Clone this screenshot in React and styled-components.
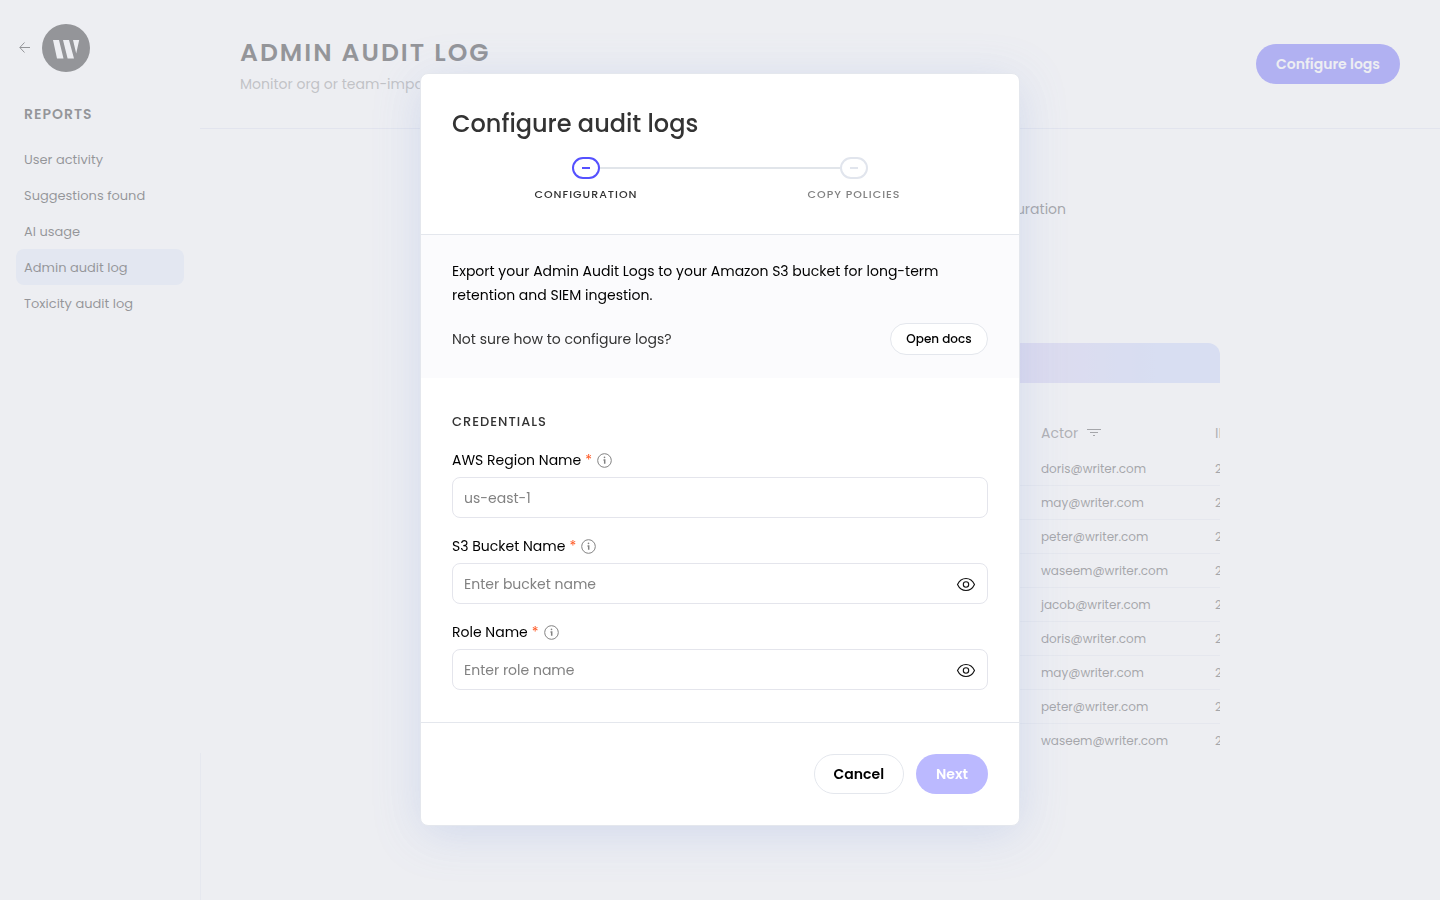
import React, { useState } from "react";
import styled, { createGlobalStyle } from "styled-components";

const GlobalStyle = createGlobalStyle`
  * {
    box-sizing: border-box;
  }
  body {
    margin: 0;
    background-color: #fff;
    color: #000;
    font-family: Poppins, Inter, "Open Sans", sans-serif;
    font-size: 14px;
    line-height: 24px;
  }
  h1, h2, h3, p, ul {
    margin: 0;
    padding: 0;
  }
  a {
    color: inherit;
    text-decoration: none;
  }
  button, input {
    font-family: inherit;
    font-size: inherit;
    line-height: inherit;
  }
`;

const Page = styled.div`
  display: flex;
  height: 100vh;
  overflow: hidden;
`;

const Sidebar = styled.aside`
  flex: 0 0 200px;
  display: flex;
  flex-direction: column;
`;

const Brand = styled.div`
  display: flex;
  align-items: center;
  gap: 9px;
  padding: 24px 0 0 18px;
`;

const IconLink = styled.a`
  display: flex;
`;

const SideTitle = styled.h2`
  padding: 30px 24px 0;
  font-size: 14px;
  line-height: 24px;
  font-weight: 600;
  letter-spacing: 1px;
`;

const Nav = styled.nav`
  display: flex;
  flex-direction: column;
  padding: 15px 16px 0;
`;

const NavItem = styled.a`
  padding: 7px 8px 5px;
  border-radius: 8px;
  font-size: 13px;
  background-color: ${(props) => (props.$active ? "#e2eafb" : "transparent")};
`;

const SideFoot = styled.div`
  flex: 0 0 147px;
  margin: auto -1px 0 0;
  border-right: 1px solid #eaeef6;
`;

const Main = styled.main`
  flex: 1;
  min-width: 0;
`;

const Header = styled.header`
  display: flex;
  justify-content: space-between;
  align-items: center;
  height: 129px;
  padding: 0 40px;
  border-bottom: 1px solid #dfe3f3;
`;

const PageTitle = styled.h1`
  padding-top: 6px;
  font-size: 25px;
  line-height: 34px;
  font-weight: 600;
  letter-spacing: 2px;
`;

const Subtitle = styled.p`
  color: #828282;
  line-height: 28px;
`;

const Button = styled.button`
  height: ${(props) => (props.$small ? "32px" : "40px")};
  min-width: ${(props) => (props.$small ? "98px" : "0")};
  padding: ${(props) => (props.$small ? "0 15px" : "0 19px")};
  border: 1px solid ${(props) => (props.$primary ? "transparent" : "#e4e7ed")};
  border-radius: 20px;
  background-color: ${(props) => (props.$primary ? "#5551ff" : "#fff")};
  color: ${(props) => (props.$primary ? "#fff" : "#000")};
  font-size: ${(props) => (props.$small ? "12px" : "14px")};
  font-weight: ${(props) => (props.$small ? 500 : 600)};
  cursor: pointer;

  &:disabled {
    background-color: #bbb9ff;
    cursor: default;
  }
`;

const Content = styled.div`
  max-width: 800px;
  margin: 0 auto;
  padding-top: 68px;
`;

const Note = styled.p`
  width: 646px;
  color: #333;
  text-align: right;
  white-space: nowrap;
`;

const Banner = styled.div`
  height: 40px;
  margin-top: 122px;
  border-radius: 12px 12px 0 0;
  background: linear-gradient(90deg, #ffd5f8, #cfcaf5 78%, #c2d0fe 92%);
`;

const TableWrap = styled.div`
  padding-top: 32px;
  overflow: hidden;
`;

const Table = styled.table`
  width: 1100px;
  table-layout: fixed;
  border-collapse: collapse;

  th {
    height: 36px;
    padding: 0;
    font-weight: 400;
    text-align: left;
    color: #4f4f4f;
  }
  td {
    height: 34px;
    padding: 1px 0 0;
    border-top: 1px solid #e9ecf3;
    font-size: 12px;
    line-height: 20px;
    color: #333;
  }
  tbody tr:first-child td {
    border-top-color: transparent;
  }
`;

const Filterable = styled.span`
  display: flex;
  align-items: center;
  gap: 8px;
`;

const Overlay = styled.div`
  position: fixed;
  inset: 0;
  display: grid;
  place-items: center;
  padding-bottom: 1px;
  background-color: rgba(228, 229, 235, 0.65);
`;

const Modal = styled.section`
  width: 600px;
  max-width: 100%;
  border: 1px solid #e4e7ed;
  border-radius: 8px;
  background-color: #fff;
  box-shadow: 0 8px 48px rgba(110, 142, 214, 0.22);
  overflow: hidden;
`;

const ModalHead = styled.div`
  padding: 34px 31px 32px;
`;

const ModalTitle = styled.h2`
  font-size: 24px;
  line-height: 32px;
  font-weight: 500;
  color: #333;
`;

const Steps = styled.div`
  display: grid;
  grid-template-columns: 1fr 1fr;
  padding-top: 17px;
`;

const Step = styled.div`
  display: flex;
  flex-direction: column;
  align-items: center;
`;

const StepTrack = styled.div`
  display: flex;
  align-items: center;
  align-self: stretch;
`;

const Line = styled.div`
  flex: 1;
  height: 2px;
  background-color: ${(props) => (props.$hidden ? "transparent" : "#e1e5ea")};
`;

const Badge = styled.div`
  display: grid;
  place-items: center;
  width: 28px;
  height: 22px;
  border: 2px solid ${(props) => (props.$active ? "#5551ff" : "#e1e5ed")};
  border-radius: 11px;

  &:before {
    content: "";
    width: 8px;
    height: 2px;
    background-color: ${(props) => (props.$active ? "#5551ff" : "#e1e5ed")};
  }
`;

const StepLabel = styled.span`
  padding-top: 7px;
  font-size: 11px;
  line-height: 16px;
  font-weight: 500;
  letter-spacing: 1px;
  color: ${(props) => (props.$active ? "#333" : "#828282")};
`;

const Info = styled.div`
  padding: 24px 31px 23px;
  border-top: 1px solid #e4e7ed;
  background-color: #fbfbfd;
`;

const DocsRow = styled.div`
  display: flex;
  align-items: center;
  justify-content: space-between;
  padding-top: 16px;
  color: #333;
`;

const Form = styled.div`
  display: flex;
  flex-direction: column;
  gap: 16px;
  padding: 33px 31px 32px;
`;

const FormTitle = styled.h3`
  font-size: 13px;
  line-height: 21px;
  font-weight: 500;
  letter-spacing: 1px;
  color: #333;
`;

const LabelRow = styled.div`
  display: flex;
  align-items: center;
  gap: 4px;
  height: 24px;
`;

const Star = styled.span`
  color: #ff5722;
`;

const InputBox = styled.div`
  display: flex;
  align-items: center;
  height: 41px;
  margin-top: 5px;
  padding: 0 11px;
  border: 1px solid #e4e5ec;
  border-radius: 8px;
`;

const Input = styled.input`
  flex: 1;
  min-width: 0;
  padding: 0;
  border: 0;
  outline: 0;
  background: none;

  &::placeholder {
    color: #828282;
  }
`;

const IconButton = styled.button`
  display: flex;
  padding: 0;
  border: 0;
  background: none;
  cursor: pointer;
`;

const Foot = styled.div`
  display: flex;
  justify-content: flex-end;
  gap: 12px;
  padding: 31px;
  border-top: 1px solid #e4e7ed;
`;

const BackIcon = () => (
  <svg width="15" height="14" viewBox="0 0 15 14" fill="none" stroke="#000">
    <path d="M12 6.500H2M6.500 1.500l-4.700 5 4.700 5" />
  </svg>
);

const Logo = () => (
  <svg width="48" height="48" viewBox="0 0 48 48">
    <circle cx="24" cy="24" r="24" />
    <path
      fill="#fff"
      d="M11 16h6l4.500 18.500H15zM21 16h6l5 18.500h-6.400zM31 16h6.200l-3 13.500z"
    />
  </svg>
);

const FilterIcon = () => (
  <svg width="16" height="10" viewBox="0 0 16 10" fill="none" stroke="#333">
    <path d="M1 1.500h14M4 4.500h8M7 7.500h2" />
  </svg>
);

const InfoIcon = () => (
  <svg width="16" height="16" viewBox="0 0 16 16" fill="none" stroke="#828282">
    <circle cx="8.500" cy="8.500" r="6.800" />
    <path d="M7.500 8h1.200v3.800" strokeWidth="1.500" />
    <circle cx="8.500" cy="5.400" r=".8" fill="#828282" stroke="none" />
  </svg>
);

const EyeIcon = () => (
  <svg width="20" height="16" viewBox="0 0 20 16" fill="none" stroke="#111">
    <path
      strokeWidth="1.100"
      d="M1.500 8.500C3.300 4.700 6.400 2.500 10 2.500s6.700 2.200 8.500 6c-1.800 3.800-4.900 6-8.500 6S3.300 12.300 1.500 8.500z"
    />
    <circle cx="10" cy="8.500" r="2.700" strokeWidth="1.100" />
  </svg>
);

const links = [
  "User activity",
  "Suggestions found",
  "AI usage",
  "Admin audit log",
  "Toxicity audit log",
];

const actors = [
  "doris",
  "may",
  "peter",
  "waseem",
  "jacob",
  "doris",
  "may",
  "peter",
  "waseem",
];

const Field = ({ id, label, placeholder, secret }) => {
  const [hidden, setHidden] = useState(false);
  return (
    <div>
      <LabelRow>
        <label htmlFor={id}>{label}</label>
        <Star>*</Star>
        <InfoIcon />
      </LabelRow>
      <InputBox>
        <Input
          id={id}
          type={hidden ? "password" : "text"}
          placeholder={placeholder}
        />
        {secret && (
          <IconButton
            type="button"
            aria-label={`Toggle ${label}`}
            onClick={() => setHidden(!hidden)}
          >
            <EyeIcon />
          </IconButton>
        )}
      </InputBox>
    </div>
  );
};

const EventCol = styled.col`
  width: 621px;
`;

const ActorCol = styled.col`
  width: 174px;
`;

const AuditTable = () => (
  <TableWrap>
    <Table>
      <colgroup>
        <EventCol />
        <ActorCol />
        <col />
      </colgroup>
      <thead>
        <tr>
          <th>Event</th>
          <th>
            <Filterable>
              Actor <FilterIcon />
            </Filterable>
          </th>
          <th>IP address</th>
        </tr>
      </thead>
      <tbody>
        {actors.map((name, i) => (
          <tr key={i}>
            <td />
            <td>{name}@writer.com</td>
            <td>2</td>
          </tr>
        ))}
      </tbody>
    </Table>
  </TableWrap>
);

const ConfigureModal = () => (
  <Overlay>
    <Modal role="dialog" aria-labelledby="modal-title">
      <ModalHead>
        <ModalTitle id="modal-title">Configure audit logs</ModalTitle>
        <Steps>
          <Step>
            <StepTrack>
              <Line $hidden />
              <Badge $active />
              <Line />
            </StepTrack>
            <StepLabel $active>CONFIGURATION</StepLabel>
          </Step>
          <Step>
            <StepTrack>
              <Line />
              <Badge />
              <Line $hidden />
            </StepTrack>
            <StepLabel>COPY POLICIES</StepLabel>
          </Step>
        </Steps>
      </ModalHead>
      <Info>
        <p>
          Export your Admin Audit Logs to your Amazon S3 bucket for long-term
          retention and SIEM ingestion.
        </p>
        <DocsRow>
          <p>Not sure how to configure logs?</p>
          <Button type="button" $small>
            Open docs
          </Button>
        </DocsRow>
      </Info>
      <Form>
        <FormTitle>CREDENTIALS</FormTitle>
        <Field id="region" label="AWS Region Name" placeholder="us-east-1" />
        <Field
          id="bucket"
          label="S3 Bucket Name"
          placeholder="Enter bucket name"
          secret
        />
        <Field
          id="role"
          label="Role Name"
          placeholder="Enter role name"
          secret
        />
      </Form>
      <Foot>
        <Button type="button">Cancel</Button>
        <Button type="button" $primary disabled>
          Next
        </Button>
      </Foot>
    </Modal>
  </Overlay>
);

const App = () => (
  <>
    <GlobalStyle />
    <Page>
      <Sidebar>
        <Brand>
          <IconLink href="#back" aria-label="Back">
            <BackIcon />
          </IconLink>
          <Logo />
        </Brand>
        <SideTitle>REPORTS</SideTitle>
        <Nav>
          {links.map((link) => (
            <NavItem key={link} href="#" $active={link === "Admin audit log"}>
              {link}
            </NavItem>
          ))}
        </Nav>
        <SideFoot />
      </Sidebar>
      <Main>
        <Header>
          <div>
            <PageTitle>ADMIN AUDIT LOG</PageTitle>
            <Subtitle>Monitor org or team-impacting changes</Subtitle>
          </div>
          <Button type="button" $primary>
            Configure logs
          </Button>
        </Header>
        <Content>
          <Note>Review changes to members, teams and configuration</Note>
          <Banner />
          <AuditTable />
        </Content>
      </Main>
    </Page>
    <ConfigureModal />
  </>
);

export default App;
